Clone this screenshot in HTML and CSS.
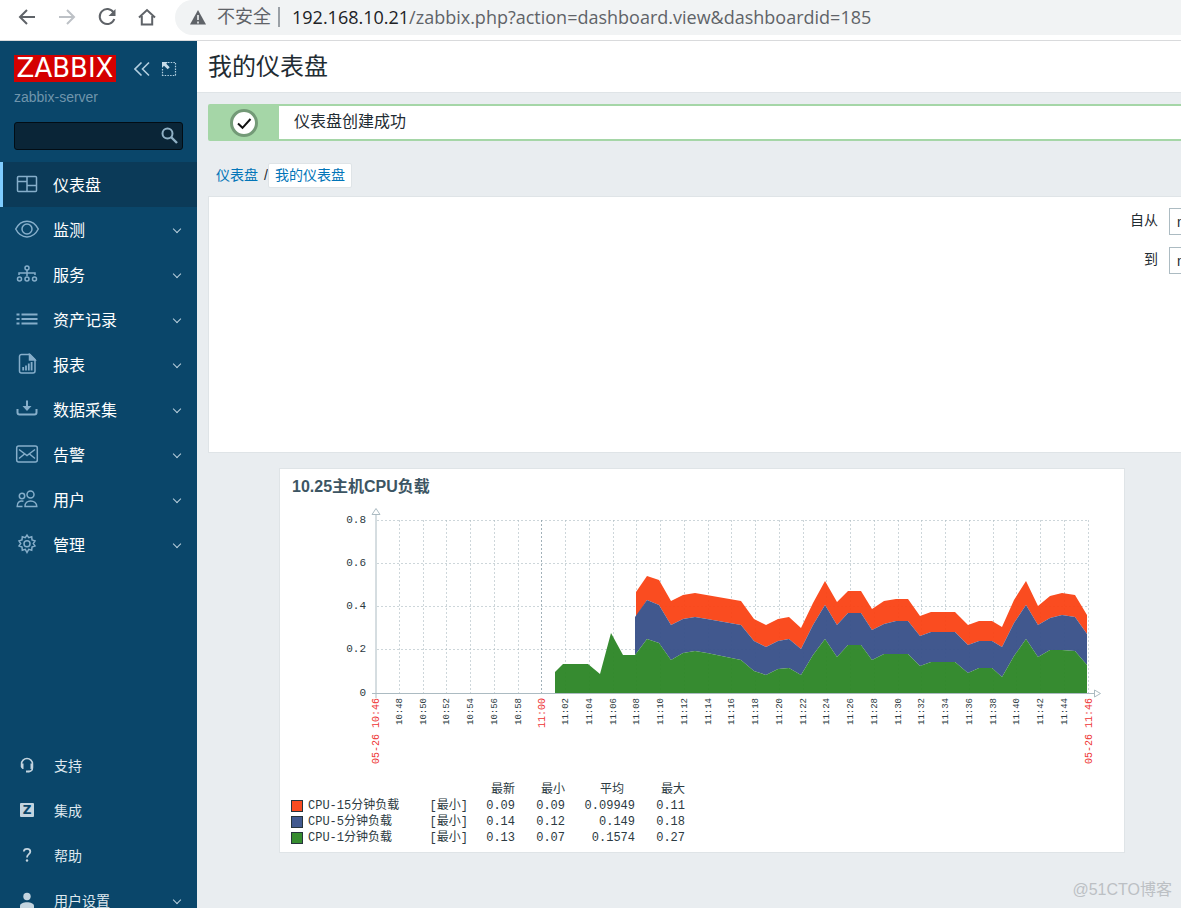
FILE: index.html
```html
<!DOCTYPE html>
<html lang="zh-CN">
<head>
<meta charset="utf-8">
<title>我的仪表盘</title>
<link rel="stylesheet" href="styles.css">
</head>
<body>
<div class="browser">
  <button class="tool" type="button" aria-label="后退"><svg width="20" height="20" viewBox="0 0 20 20"><path d="M18 10H3M10 3L3 10l7 7" stroke="#5f6368" stroke-width="2"/></svg></button>
  <button class="tool" type="button" aria-label="前进"><svg width="20" height="20" viewBox="0 0 20 20"><path d="M2 10h15M10 3l7 7-7 7" stroke="#bdc1c6" stroke-width="2"/></svg></button>
  <button class="tool" type="button" aria-label="刷新"><svg width="20" height="20" viewBox="0 0 20 20"><path d="M16.500 5.500A7.500 7.500 0 1 0 17.300 12" stroke="#5f6368" stroke-width="2"/><path d="M18.500 2v7h-7z" fill="#5f6368"/></svg></button>
  <button class="tool" type="button" aria-label="主页"><svg width="20" height="20" viewBox="0 0 20 20"><path d="M2 10.500L10 3l8 7.500M4.800 9v8.500h10.400V9" stroke="#5f6368" stroke-width="2"/></svg></button>
  <div class="address">
    <svg width="16" height="15" viewBox="0 0 16 15"><path d="M8 0l8 14.500H0z" fill="#5f6368"/><path d="M8 5v5M8 11.500v2" stroke="#f1f3f4" stroke-width="1.600"/></svg>
    <span class="insecure">不安全</span>
    <span class="url"><span class="host">192.168.10.21</span>/zabbix.php?action=dashboard.view&amp;dashboardid=185</span>
  </div>
</div>
<div class="app">
  <aside class="sidebar">
    <div class="brand">
      <span class="logo">ZABBIX</span>
      <button class="tool" type="button" aria-label="收起"><svg width="16" height="16" viewBox="0 0 16 16"><path d="M7.500 1.500L1 8l6.500 6.500M15 1.500L8.500 8l6.500 6.500" stroke="#b3cfe0" stroke-width="1.600"/></svg></button>
      <button class="tool" type="button" aria-label="隐藏"><svg width="16" height="16" viewBox="0 0 16 16"><path d="M7 1.500h8M14.500 2v13M1.500 8v7M1 14.500h14" stroke="#b3cfe0" stroke-width="1.200" stroke-dasharray="1.500 1.200"/><path d="M1 1h6L5.200 2.800l3.500 3.500-2 2L3 4.800 1 7z" fill="#c6dce9"/></svg></button>
    </div>
    <div class="server">zabbix-server</div>
    <form class="search">
      <input type="search" aria-label="搜索">
      <button class="tool" type="button" aria-label="搜索"><svg width="18" height="18" viewBox="0 0 18 18"><circle cx="7.500" cy="6.500" r="5" stroke="#8fb0c5" stroke-width="2"/><path d="M11 10l6 6" stroke="#8fb0c5" stroke-width="2.400"/></svg></button>
    </form>
    <nav class="menu">
      <a class="item active" href="#"><svg width="22" height="22" viewBox="0 0 22 22"><rect x="1.500" y="3.500" width="19" height="15" rx="1"/><path d="M11 3.500v15M1.500 8.500H11M11 12.500h9.500"/></svg>仪表盘</a>
      <a class="item" href="#"><svg width="24" height="22" viewBox="0 0 24 22"><path d="M.7 11C6 .5 18 .5 23.300 11 18 21.500 6 21.500.7 11z"/><circle cx="12" cy="11" r="5"/></svg>监测<i class="chev"></i></a>
      <a class="item" href="#"><svg width="22" height="22" viewBox="0 0 22 22"><circle cx="11" cy="5" r="2"/><circle cx="3.500" cy="16" r="2"/><circle cx="11" cy="16" r="2"/><circle cx="18.500" cy="16" r="2"/><path d="M11 7v6M3 12V10h16v2"/></svg>服务<i class="chev"></i></a>
      <a class="item" href="#"><svg width="22" height="22" viewBox="0 0 22 22"><path d="M.5 6.500h3M5.500 6.500h16M.5 11h3M5.500 11h16M.5 15.500h3M5.500 15.500h16" stroke-width="2"/></svg>资产记录<i class="chev"></i></a>
      <a class="item" href="#"><svg width="22" height="22" viewBox="0 0 22 22"><path d="M5.500 1.500H14l5 5V18a2 2 0 0 1-2 2H5.500a2 2 0 0 1-2-2V3.500a2 2 0 0 1 2-2z"/><path d="M13.500 1.500l5.500 5.500h-5.500z" fill="#86aeca"/><path d="M7.200 14v3.500M10 12.500v5M12.800 10.500v7M15.600 9v8.500" stroke-width="1.800"/></svg>报表<i class="chev"></i></a>
      <a class="item" href="#"><svg width="22" height="22" viewBox="0 0 22 22"><path d="M1.500 11v3.500a2 2 0 0 0 2 2h15a2 2 0 0 0 2-2V11M11 2.500v9" stroke-width="2"/><path d="M6.500 8h9L11 13z" fill="#86aeca" stroke="none"/></svg>数据采集<i class="chev"></i></a>
      <a class="item" href="#"><svg width="22" height="22" viewBox="0 0 22 22"><rect x=".7" y="3" width="20.600" height="16" rx="2"/><path d="M3 6.500l8 6 8-6M3 15.500l5.500-4.500M19 15.500L13.500 11"/></svg>告警<i class="chev"></i></a>
      <a class="item" href="#"><svg width="22" height="22" viewBox="0 0 22 22"><circle cx="14.500" cy="6.500" r="3.500"/><circle cx="6" cy="8" r="2.700"/><path d="M9 18.500C8.500 11 20.500 11 20.800 18.500zM6.500 18.500H1.200C1 14 4 12.500 7.500 13.300"/></svg>用户<i class="chev"></i></a>
      <a class="item" href="#"><svg width="22" height="22" viewBox="0 0 22 22"><path d="M9.300 4.600L11 2l1.700 2.600 3-.9.300 3.200 3 1-1.700 2.700L19 13l-3 1.100-.3 3.200-3-.9L11 19.500l-1.700-3.100-3 .9-.3-3.200L3 13l1.700-2.400L3 7.900l3-1 .3-3.200z"/><circle cx="11" cy="10.700" r="3"/></svg>管理<i class="chev"></i></a>
    </nav>
    <nav class="menu minor">
      <a class="item" href="#"><svg width="22" height="22" viewBox="0 0 22 22"><path d="M5.500 13V10a5.500 5.500 0 0 1 11 0v3.500c0 2.500-1.500 4-4 4" stroke-width="1.500"/><path d="M5 9.500h2.500V15H6.500L5 13.500zM17 9.500h-2.500V15h1L17 13.500zM10 16.500h3.500v2H10z" fill="#c3d4df" stroke="none"/></svg>支持</a>
      <a class="item" href="#"><span class="zbadge">Z</span>集成</a>
      <a class="item" href="#"><svg width="22" height="22" viewBox="0 0 22 22"><path d="M7.800 7.500c.3-3.500 6.500-3.500 6.500.2 0 2.500-3.300 2.500-3.300 5.800" stroke-width="1.800"/><circle cx="11" cy="16.500" r="1.200" fill="#c3d4df" stroke="none"/></svg>帮助</a>
      <a class="item" href="#"><svg width="22" height="22" viewBox="0 0 22 22"><circle cx="11" cy="7.500" r="3.700" fill="#c3d4df" stroke="none"/><path d="M4 19v-2c0-5 14-5 14 0v2z" fill="#c3d4df" stroke="none"/></svg>用户设置<i class="chev"></i></a>
    </nav>
  </aside>
  <main class="main">
    <header class="head"><h1>我的仪表盘</h1></header>
    <div class="content">
      <div class="message" role="status">
        <div class="mark"><svg width="30" height="30" viewBox="0 0 30 30"><circle cx="15" cy="15" r="12.500" fill="#fff" stroke="#739a77" stroke-width="3"/><path d="M9 15.500l4.500 4.300L21.500 11" stroke="#111" stroke-width="2"/></svg></div>
        <p>仪表盘创建成功</p>
      </div>
      <nav class="crumbs"><a href="#">仪表盘</a><span>/</span><a class="current" href="#">我的仪表盘</a></nav>
      <form class="filter">
        <label for="from">自从</label><input id="from" value="now-1h">
        <label for="to">到</label><input id="to" value="now">
      </form>
      <section class="widget">
        <h2>10.25主机CPU负载</h2>
        <svg class="chart" viewBox="280 505 844 265" role="img" aria-label="CPU负载">
          <g id="grid"></g>
          <g class="areas">
            <path class="red" d="M636 617V592L647 576 659 580 671 601 683 595 695 593 741 601 754 619 766 625 778 619 789 617 801 628 813 603 825 581 837 602 848 591H861L872 609 884 601 896 599H908L920 616 931 612H955L968 625 979 621H992L1002 627 1014 600 1026 581 1038 606 1050 596 1062 593 1075 595 1087 615V634L1075 617 1062 615 1050 618 1038 625 1026 605 1014 623 1002 647 992 641H979L968 645 955 632H931L920 636 908 621H896L884 624 872 630 861 613H848L837 625 825 605 813 625 801 649 789 639 778 641 766 647 754 641 741 625 707 619 695 617 683 619 671 625 659 605 647 600z"/>
            <path class="blue" d="M635 655V617L647 600 659 605 671 625 683 619 695 617 707 619 741 625 754 641 766 647 778 641 789 639 801 649 813 625 825 605 837 625 848 613H861L872 630 884 624 896 621H908L920 636 931 632H955L968 645 979 641H992L1002 647 1014 623 1026 605 1038 625 1050 618 1062 615 1075 617 1087 634V665L1075 651 1062 650H1050L1038 657 1026 639 1014 656 1002 677 992 668H979L968 673 955 662H931L920 666 908 654H884L872 660 861 645H848L837 657 825 639 813 655 801 675 789 668 778 669 766 675 754 671 741 660 707 653 695 651 683 653 671 660 659 643 647 639z"/>
            <path class="green" d="M555 693V672L563 664H588L600 674 611 633 623 655H635L647 639 659 643 671 660 683 653 695 651 707 653 741 660 754 671 766 675 778 669 789 668 801 675 813 655 825 639 837 657 848 645H861L872 660 884 654H908L920 666 931 662H955L968 673 979 668H992L1002 677 1014 656 1026 639 1038 657 1050 650H1062L1075 651 1087 665V693z"/>
          </g>
          <path class="axis" d="M376 514V698M372 693.500H1094"/>
          <path class="arrow" d="M372 514.500h8l-4-6zM1094.500 690v7l6-3.500z"/>
          <g id="labels"></g>
        </svg>
        <table class="legend">
          <thead><tr><th class="c-key"></th><th class="c-name"></th><th class="c-fn"></th><th class="c-last">最新</th><th class="c-min">最小</th><th class="c-avg">平均</th><th class="c-max">最大</th></tr></thead>
          <tbody>
            <tr><td><i class="key k-red"></i></td><td class="name">CPU-15分钟负载</td><td>[最小]</td><td>0.09</td><td>0.09</td><td>0.09949</td><td>0.11</td></tr>
            <tr><td><i class="key k-blue"></i></td><td class="name">CPU-5分钟负载</td><td>[最小]</td><td>0.14</td><td>0.12</td><td>0.149</td><td>0.18</td></tr>
            <tr><td><i class="key k-green"></i></td><td class="name">CPU-1分钟负载</td><td>[最小]</td><td>0.13</td><td>0.07</td><td>0.1574</td><td>0.27</td></tr>
          </tbody>
        </table>
      </section>
    </div>
  </main>
</div>
<div class="watermark">@51CTO博客</div>
<script src="chart.js"></script>
</body>
</html>
```
FILE: chart.js
```js
const NS = "http://www.w3.org/2000/svg";
const grid = document.getElementById("grid");
const labels = document.getElementById("labels");

function add(parent, tag, attrs, text) {
  const el = document.createElementNS(NS, tag);
  for (const key in attrs) el.setAttribute(key, attrs[key]);
  if (text) el.textContent = text;
  parent.appendChild(el);
}

const rows = [["0.8", 520], ["0.6", 563], ["0.4", 606], ["0.2", 649], ["0", 693]];
for (const [value, y] of rows) {
  if (value !== "0") add(grid, "path", { d: `M377 ${y + 0.5}H1089` });
  add(labels, "text", { x: 366, y: y + 3, class: "value" }, value);
}

// One vertical line and one time label every two minutes, 10:46 to 11:46.
for (let i = 0; i <= 30; i++) {
  const x = 375 + Math.round(i * 23.75);
  const minutes = 646 + i * 2;
  const time = Math.floor(minutes / 60) + ":" + String(minutes % 60).padStart(2, "0");
  const edge = i === 0 || i === 30;
  const strong = edge || minutes % 60 === 0;
  if (i > 0) add(grid, "path", { d: `M${x + 0.5} 520V693`, class: strong && !edge ? "hour" : "" });
  const baseline = strong ? x + 4 : x + 3;
  add(labels, "text", {
    x: baseline, y: 698, transform: `rotate(-90 ${baseline} 698)`, class: strong ? "time strong" : "time"
  }, edge ? "05-26 " + time : time);
}
```
FILE: styles.css
```css
* { box-sizing: border-box; }
body { margin: 0; height: 100vh; overflow: hidden; background: #e9edf0; color: #1f2c33; font-family: "Liberation Sans", "Noto Sans CJK SC", sans-serif; font-size: 14px; }
a { color: #0275b8; text-decoration: none; }
svg { display: block; fill: none; flex: none; }
.tool { display: flex; padding: 0; border: 0; background: none; }

.browser { display: flex; align-items: center; height: 41px; padding: 0 0 6px 17px; gap: 20px; background: #fff; border-bottom: 1px solid #d9dadc; }
.address { display: flex; flex: 1; align-items: center; min-width: 0; height: 35px; margin-left: -2px; padding-left: 15px; background: #f1f3f4; border-radius: 18px 0 0 18px; color: #5f6368; font-size: 18px; white-space: nowrap; }
.insecure { margin-left: 11px; padding-right: 7px; line-height: 20px; border-right: 2px solid #9aa0a6; }
.url { margin-left: 12px; font-family: "Open Sans", sans-serif; }
.host { color: #202124; }

.app { display: flex; align-items: flex-start; }
.sidebar { display: flex; flex: none; flex-direction: column; width: 197px; min-height: calc(100vh - 26px); background: #0a466a; }
.brand { display: flex; align-items: center; gap: 11px; padding: 14px 14px 0; }
.logo { width: 102px; margin-right: 7px; background: #d40000; color: #fff; font: 26px/27px "DejaVu Sans", sans-serif; text-align: center; }
.server { padding: 7px 14px 0; color: #7095ac; font-size: 14px; line-height: 16px; }
.search { display: flex; align-items: center; height: 28px; margin: 17px 14px 12px; padding-right: 4px; background: #0a2537; border: 1px solid #020d15; border-radius: 3px; }
.search input { flex: 1; min-width: 0; border: 0; background: none; color: #fff; }
.item { display: flex; align-items: center; height: 45px; padding: 0 0 2px 15px; color: #fff; font-size: 16px; }
.item svg { width: 24px; margin-right: 14px; stroke: #86aeca; stroke-width: 1.5; }
.item.active { padding-left: 12px; border-left: 3px solid #7fccff; background: #0b3a58; }
.chev { width: 6px; height: 6px; margin: 0 17px 0 auto; border: solid #b9cfdd; border-width: 0 1px 1px 0; transform: rotate(45deg); }
.minor { margin-top: auto; }
.minor .item { color: #dfe8ee; font-size: 14px; }
.minor .item svg { margin-right: 15px; stroke: #c3d4df; }
.zbadge { width: 14px; height: 14px; margin: 0 20px 0 5px; border-radius: 1px; background: #c3d4df; color: #0a466a; font: bold 12px/14px "DejaVu Sans", sans-serif; text-align: center; }

.main { flex: 1; min-width: 0; }
.head { height: 52px; padding-left: 11px; background: #fff; border-bottom: 1px solid #dfe4e7; }
h1 { margin: 0; font-size: 24px; font-weight: 400; line-height: 51px; }
.content { padding: 11px 0 0 11px; }
.message { display: flex; height: 37px; border: solid #a5d6a7; border-width: 2px 0; border-radius: 2px 0 0 2px; background: #fff; }
.mark { display: flex; align-items: center; justify-content: center; width: 71px; background: #a5d6a7; }
.message p { margin: 0 0 0 15px; font-size: 16px; line-height: 31px; }
.crumbs { display: flex; align-items: center; margin: 22px 0 8px; padding-left: 8px; line-height: 23px; }
.crumbs span { margin-left: 6px; }
.crumbs .current { padding: 0 6px; border: 1px solid #dfe4e7; border-radius: 2px; background: #fff; }
.filter { display: grid; grid-template-columns: 1fr 12px; align-content: start; gap: 12px 11px; height: 257px; padding-top: 11px; overflow: hidden; border: 1px solid #dfe4e7; border-right: 0; background: #fff; }
.filter label { line-height: 25px; text-align: right; }
.filter input { width: 180px; height: 27px; padding: 0 7px; border: 1px solid #acbbc2; background: #fff; color: #1f2c33; font: inherit; }

.widget { max-width: 846px; margin: 15px 0 0 71px; border: 1px solid #dfe4e7; background: #fff; }
h2 { margin: 0; padding-left: 12px; color: #3c5563; font-size: 16px; font-weight: 700; line-height: 36px; }
.chart { width: 100%; height: auto; font-family: "Liberation Mono", monospace; }
.areas { opacity: .96; }
.red { fill: #fa4517; }
.blue { fill: #3a528a; }
.green { fill: #2e8728; }
#grid path { stroke: #acbbc2; stroke-opacity: .6; stroke-dasharray: 2 2; }
#grid .hour { stroke: #8a9da8; stroke-opacity: .8; }
.axis { stroke: #acbbc2; }
.arrow { fill: #fff; stroke: #acbbc2; }
.value, .time { fill: #2c3a42; text-anchor: end; }
.value { font-size: 11px; }
.time { font-size: 9px; }
.time.strong { font-size: 10px; fill: #ee3333; }
.legend { width: 394px; margin: 12px 0 6px 11px; border-collapse: collapse; table-layout: fixed; color: #2c3a42; font: 12px/16px "Liberation Mono", "Noto Sans CJK SC", monospace; white-space: nowrap; }
.legend th { height: 16px; padding: 0; font-weight: 400; line-height: 16px; text-align: right; }
.legend td { height: 16px; padding: 0; line-height: 16px; text-align: right; }
.legend .name { text-align: left; }
.c-key { width: 17px; }
.c-name { width: 120px; }
.c-fn { width: 40px; }
.c-last { width: 47px; }
.c-min { width: 50px; }
.c-avg { width: 70px; }
.c-max { width: 50px; }
.legend .c-avg { padding-right: 11px; }
.key { display: block; width: 12px; height: 12px; border: 1px solid #26343c; }
.k-red { background: #f94b20; }
.k-blue { background: #41598f; }
.k-green { background: #368c30; }
.watermark { position: absolute; right: 9px; bottom: 6px; color: #bcc0c4; font-size: 16px; line-height: 24px; }
```
